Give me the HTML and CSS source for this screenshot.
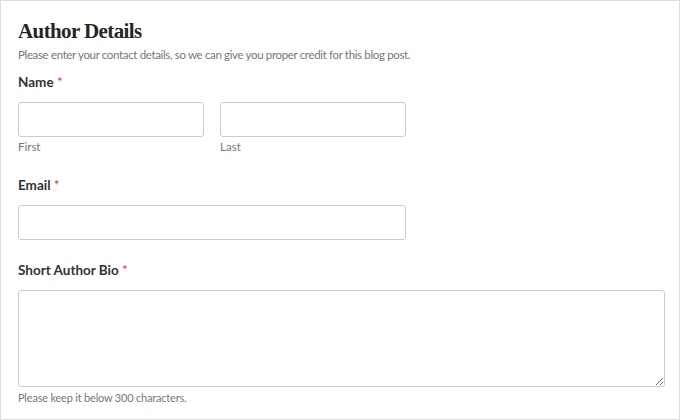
FILE: index.html
```html
<!DOCTYPE html>
<html lang="en">
<head>
    <meta charset="UTF-8">
    <meta name="viewport" content="width=device-width, initial-scale=1.0">
    <title>Author Details</title>
    <link rel="stylesheet" href="styles.css">
</head>
<body>
    <div class="form-frame">
        <h2 class="form-title">Author Details</h2>
        <p class="form-desc">Please enter your contact details, so we can give you proper credit for this blog post.</p>

        <!-- Name -->
        <div class="field">
            <label class="field-label">Name <span class="required">*</span></label>
            <div class="name-row">
                <div class="name-part">
                    <input type="text" class="text-input">
                    <span class="sublabel">First</span>
                </div>
                <div class="name-part">
                    <input type="text" class="text-input">
                    <span class="sublabel">Last</span>
                </div>
            </div>
        </div>

        <!-- Email -->
        <div class="field">
            <label class="field-label">Email <span class="required">*</span></label>
            <div class="medium">
                <input type="email" class="text-input">
            </div>
        </div>

        <!-- Bio -->
        <div class="field">
            <label class="field-label">Short Author Bio <span class="required">*</span></label>
            <textarea class="text-area"></textarea>
            <div class="field-desc">Please keep it below 300 characters.</div>
        </div>
    </div>
</body>
</html>
```

FILE: styles.css
```css
* {
    margin: 0;
    padding: 0;
    box-sizing: border-box;
}

body {
    font-family: 'Lato', 'Open Sans', sans-serif;
    background: #fff;
    color: #333;
}

.form-frame {
    width: 680px;
    height: 420px;
    border: 1px solid #ddd;
    padding: 18px 14px 0 17px;
    overflow: hidden;
}

.form-title {
    font-family: 'Liberation Serif', 'DejaVu Serif', serif;
    font-size: 21px;
    font-weight: bold;
    letter-spacing: -0.6px;
    color: #262626;
    line-height: 24px;
}

.form-desc {
    font-size: 11.5px;
    letter-spacing: -0.35px;
    color: #777;
    margin-top: 4px;
    line-height: 16px;
}

.field {
    margin-top: 10px;
}

.field + .field {
    margin-top: 21px;
}

.field-label {
    display: block;
    font-size: 13.5px;
    font-weight: bold;
    color: #333;
    line-height: 18px;
    margin-bottom: 11px;
}

.required {
    color: #d63637;
    font-weight: normal;
}

.name-row {
    display: flex;
    gap: 16px;
    width: 60%;
}

.name-part {
    flex: 1;
}

.medium {
    width: 60%;
}

.text-input {
    display: block;
    width: 100%;
    height: 35px;
    border: 1px solid #ccc;
    border-radius: 3px;
    background: #fff;
}

.sublabel {
    display: block;
    font-size: 11.5px;
    color: #777;
    margin-top: 2px;
    line-height: 16px;
}

.text-area {
    display: block;
    width: 100%;
    height: 97px;
    margin-top: 1px;
    border: 1px solid #ccc;
    border-radius: 3px;
    resize: both;
}

.field-desc {
    font-size: 11px;
    letter-spacing: -0.2px;
    color: #777;
    margin-top: 3px;
    line-height: 16px;
}
```
